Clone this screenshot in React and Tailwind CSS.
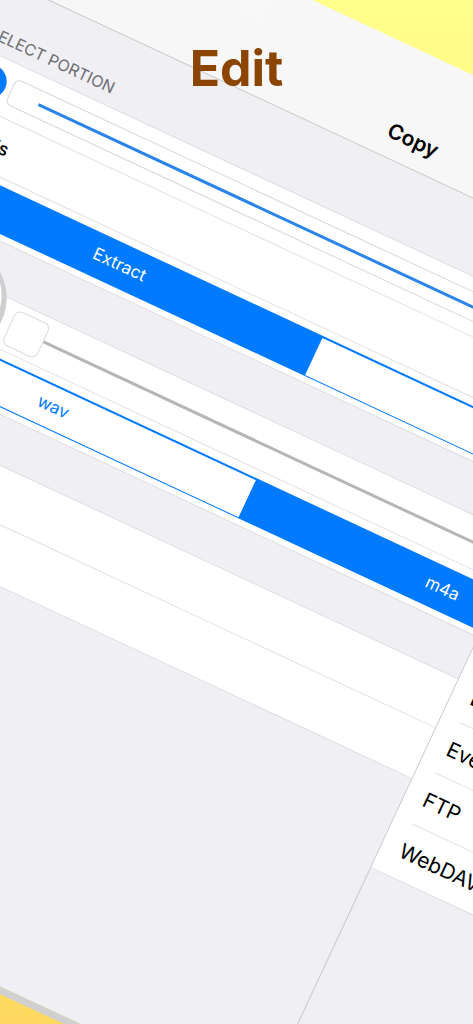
const font = "[font-family:Inter,sans-serif]";

function Segmented({ left, right, leftOn }) {
  const on = "bg-[#007aff] text-white";
  const off = "bg-white text-[#007aff]";
  return (
    <div className="ml-[204px] flex h-[44px] w-[862px] bg-[#007aff] p-[1.5px] text-[17px]">
      <div className={`flex flex-1 items-center justify-center ${leftOn ? on : off}`}>{left}</div>
      <div className={`flex flex-1 items-center justify-center ${leftOn ? off : on}`}>{right}</div>
    </div>
  );
}

function ServiceRow({ label, last }) {
  return (
    <div className="flex h-[56px] flex-col justify-center pl-[19px]">
      <div className="flex flex-1 items-center text-[21px] text-black">{label}</div>
      {!last && <div className="h-px bg-[#e2e2e4]" />}
    </div>
  );
}

export default function App() {
  return (
    <div className={`relative h-[1024px] w-[473px] overflow-hidden bg-gradient-to-b from-[#ffff8b] to-[#ffd95f] ${font}`}>
      {/* device, tilted */}
      <div className="absolute left-0 top-0 w-[1500px] origin-top-left [transform:rotate(25deg)_translate(-200px,-132px)]">
        {/* nav bar */}
        <div className="relative flex h-[112px] items-end border-b border-[#c8c7cc] bg-[#f7f7f8] pb-[12px] pl-[607px]">
          <div className="absolute left-[423px] top-[20px] h-[22px] w-[24px] rounded-[3px] bg-[#f8f8f9]" />
          <span className="text-[21px] font-semibold leading-[28px] text-black">Copy</span>
        </div>

        <div className="bg-[#efeff4]">
          {/* select portion */}
          <div className="flex h-[70px] items-end pb-[8px] pl-[204px] text-[16px] uppercase leading-[20px] text-[#6d6d72]">
            Select Portion
          </div>
          <div className="border-y border-[#dcdce0] bg-white">
            <div className="flex h-[55px] items-center border-b border-[#e2e2e4] pl-[208px]">
              <div className="h-[34px] w-[34px] rounded-full bg-[#007aff]" />
              <div className="ml-[6px] flex h-[28px] w-[640px] items-center rounded-[6px] border border-[#d8d8d8] px-[30px]">
                <div className="h-[3px] w-full bg-[#2b84ea]" />
              </div>
            </div>
            <div className="flex h-[55px] items-center justify-end border-b border-[#e2e2e4] pr-[1229px] text-[18px] font-medium text-black">
              Seconds
            </div>
            <div className="h-[57px] pt-[7px]">
              <Segmented left="Extract" right="" leftOn />
            </div>
          </div>

          {/* slider section */}
          <div className="h-[47px]" />
          <div className="relative border-y border-[#dcdce0] bg-white">
            <div className="absolute left-[229px] top-[-31px] h-[108px] w-[108px] rounded-full bg-[#cecece]">
              <div className="ml-[-1.5px] mt-[1px] h-[103px] w-[103px] rounded-full bg-white" />
            </div>
            <div className="relative flex h-[50px] items-center border-b border-[#e2e2e4] pl-[346px]">
              <div className="h-[38px] w-[38px] rounded-[7px] border border-[#dcdcdc] bg-white" />
              <div className="h-[3px] w-[500px] bg-[#b6b6b6]" />
            </div>
            <div className="h-[58px] pt-[8px]">
              <Segmented left="wav" right="m4a" />
            </div>
          </div>

          {/* lower part, list on the left and services on the right */}
          <div className="flex h-[518px]">
            <div className="w-[902px] pt-[45px]">
              <div className="border-y border-[#dcdce0] bg-white">
                <div className="h-[54px] border-b border-[#e2e2e4]" />
                <div className="h-[55px]" />
              </div>
            </div>
            <div className="flex-1 border-l border-[#c8c7cc]">
              <div className="border-b border-[#dcdce0] bg-white pt-[29px]">
                <ServiceRow label="Dropbox" />
                <ServiceRow label="Evernote" />
                <ServiceRow label="FTP" />
                <ServiceRow label="WebDAV" last />
              </div>
            </div>
          </div>
        </div>
        <div className="h-[7px] bg-[#d0d0d0]" />
      </div>

      {/* headline sits flat over the tilted device */}
      <div className="absolute inset-x-0 top-[34px] text-center text-[50px] font-bold leading-[68px] text-[#8b4500]">
        Edit
      </div>
    </div>
  );
}
